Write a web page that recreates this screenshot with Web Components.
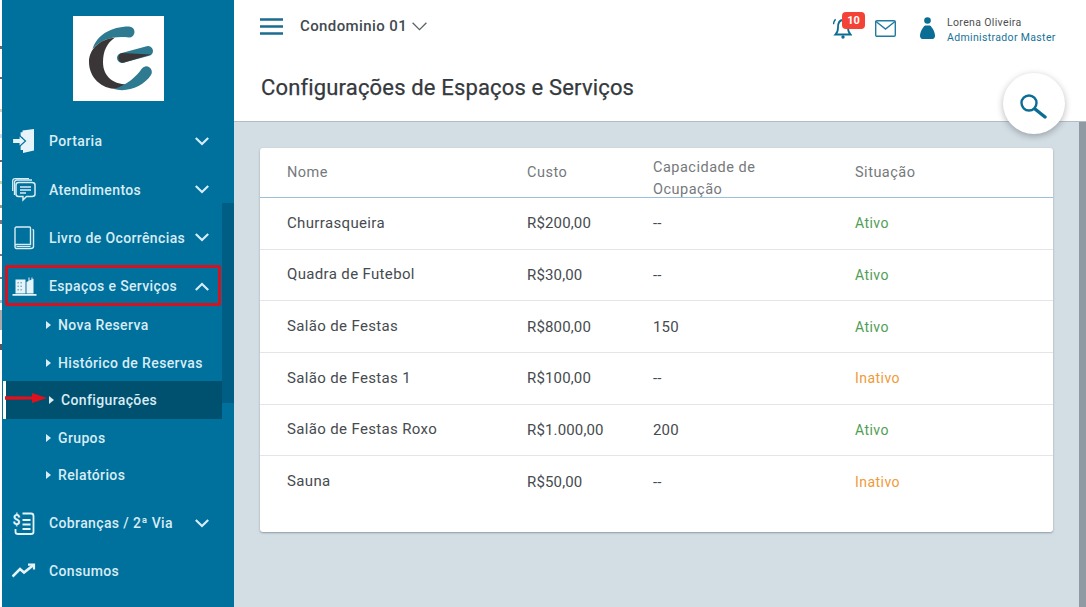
<!DOCTYPE html>
<html lang="pt-BR">
<head>
<meta charset="utf-8">
<title>Configurações de Espaços e Serviços</title>
<style>
    html, body { margin: 0; height: 100%; overflow: hidden; background: #fff; }
    body { font-family: Roboto, "Liberation Sans", sans-serif; }
</style>
</head>
<body>
<app-shell>
    <side-nav slot="nav">
        <nav-item label="Portaria" chevron="down">
            <svg slot="icon" width="24" height="24" viewBox="0 0 24 24"><path d="M10.500 1.500 22 0v21.500L11 24v-3H8.600V15h2zM10.600 3.200v5h-2V3.200z" fill="#e6f3f8"/><path d="M.500 9.500h6.500V6l6.500 6-6.500 6v-3.500H.500z" fill="#e6f3f8" stroke="#00709c" stroke-width="1.200"/></svg>
        </nav-item>
        <nav-item label="Atendimentos" chevron="down">
            <svg slot="icon" width="24" height="24" viewBox="0 0 24 24" fill="none" stroke="#d9edf5" stroke-width="1.300"><path d="M2.500 17V4.500Q2.500 2 5 2h15"/><path d="M.7 13V3Q.7.700 3 .7h14"/><path d="M6.500 4.500h13.500q3 0 3 2.500v9q0 2.500-3 2.500h-5.500l-3.500 3.500v-3.500h-4.500q-2.500 0-2.500-2.500v-9q0-2.500 2.500-2.500z" stroke-width="1.500"/><path d="M8 9h11M8 12h11M8 15h6"/></svg>
        </nav-item>
        <nav-item label="Livro de Ocorrências" chevron="down">
            <svg slot="icon" width="24" height="24" viewBox="0 0 24 24" fill="none" stroke="#d9edf5" stroke-width="1.400"><path d="M3 20.500V2.500Q3 1 4.500 1h13q1 0 1 1v16.500h-14q-1.500 0-1.500 2t1.500 2h14q3 0 3-2V4.500q0-1-1-1"/><path d="M4.500 20.500h14" stroke-width="1"/></svg>
        </nav-item>
        <nav-item label="Espaços e Serviços" chevron="up">
            <svg slot="icon" width="25" height="24" viewBox="0 0 25 24"><path d="M3.500 5.500h10v14h-10zM14.500 8l2-1V3.500h1V6.500l2-1V3.500h1v1.800l1-.5v14.700h-7zM.500 20h24v1.800H.500z" fill="#e6f3f8"/><path d="M5.500 8h1.300v1.500H5.500zM8.500 8h1.300v1.500H8.500zM5.500 11.500h1.300V13H5.500zM8.500 11.500h1.300V13H8.500zM5.500 15h1.300v1.500H5.500zM8.500 15h1.300v1.500H8.500z" fill="#6aa9c4"/></svg>
        </nav-item>
        <sub-nav>
            <sub-item>Nova Reserva</sub-item>
            <sub-item>Histórico de Reservas</sub-item>
            <sub-item active>Configurações</sub-item>
            <sub-item>Grupos</sub-item>
            <sub-item>Relatórios</sub-item>
        </sub-nav>
        <nav-item label="Cobranças / 2ª Via" chevron="down">
            <svg slot="icon" width="24" height="24" viewBox="0 0 24 24" fill="none" stroke="#e6f3f8" stroke-width="1.800"><path d="M10.500 2.500H19q2.500 0 2.500 2.500v16q0 2-2.500 2H6q-2.500 0-2.500-2v-3"/><path d="M10.500 9h8M10.500 13.500h8M10.500 18h8"/><text x="0.500" y="13.500" font-family="Roboto, sans-serif" font-size="14" font-weight="700" fill="#e6f3f8" stroke="none">$</text></svg>
        </nav-item>
        <nav-item label="Consumos">
            <svg slot="icon" width="24" height="24" viewBox="0 0 24 24" fill="none" stroke="#e6f3f8" stroke-width="2.600"><path d="M.5 17.600l7.500-7.500 4 3.500 9.500-7.500"/><path d="M16 5.600h6v5" stroke-width="2.200"/></svg>
        </nav-item>
    </side-nav>

    <top-bar slot="header" condo="Condominio 01" user="Lorena Oliveira" role="Administrador Master" badge="10">Configurações de Espaços e Serviços</top-bar>

    <data-table>
        <table-row head><span>Nome</span><span>Custo</span><span>Capacidade de Ocupação</span><span>Situação</span></table-row>
        <table-row><span>Churrasqueira</span><span>R$200,00</span><span>--</span><status-text>Ativo</status-text></table-row>
        <table-row><span>Quadra de Futebol</span><span>R$30,00</span><span>--</span><status-text>Ativo</status-text></table-row>
        <table-row><span>Salão de Festas</span><span>R$800,00</span><span>150</span><status-text>Ativo</status-text></table-row>
        <table-row><span>Salão de Festas 1</span><span>R$100,00</span><span>--</span><status-text off>Inativo</status-text></table-row>
        <table-row><span>Salão de Festas Roxo</span><span>R$1.000,00</span><span>200</span><status-text>Ativo</status-text></table-row>
        <table-row last><span>Sauna</span><span>R$50,00</span><span>--</span><status-text off>Inativo</status-text></table-row>
    </data-table>
</app-shell>

<script>
    // Page frame: sidebar on the left, header and content on the right
    class AppShell extends HTMLElement {
        constructor() {
            super();
            this.attachShadow({mode: 'open'});
            this.shadowRoot.innerHTML = `
                <style>
                    :host { display: flex; height: 607px; overflow: hidden; }
                    #edge {
                        width: 2px;
                        flex: none;
                        background: linear-gradient(#fff 0 46px, #667 46px 49px, #fff 49px 77px, #667 77px 79px, #fff 79px 109px, #d8cfb4 109px 112px, #fff 112px 134px, #c9dce8 134px 138px, #fff 138px 160px, #667 160px 162px, #fff 162px 181px, #c3d3b0 181px 184px, #fff 184px 205px, #998 205px 208px, #fff 208px 220px, #778 220px 224px, #fff 224px 254px, #778 254px 256px, #fff 256px 277px, #778 277px 279px, #fff 279px 300px, #9bc 300px 303px, #fff 303px 310px, #aaa 310px 330px, #fff 330px 344px, #556 344px 350px, #fff 350px);
                    }
                    #main { flex: 1; min-width: 0; display: flex; flex-direction: column; position: relative; }
                    #body { flex: 1; display: flex; min-height: 0; }
                    #content { flex: 1; background: #d2dde4; padding: 26px 26px 0; }
                    #strip { width: 7px; flex: none; background: #8f9aa3; }
                    #fab {
                        position: absolute;
                        top: 73px;
                        right: 21px;
                        width: 62px;
                        height: 61px;
                        border-radius: 50%;
                        background: #fff;
                        box-shadow: 0 2px 7px rgba(0,0,0,0.28);
                        display: flex;
                        align-items: center;
                        justify-content: center;
                    }
                    #fab svg { margin-top: 6px; margin-right: 1px; }
                </style>
                <div id="edge"></div>
                <slot name="nav"></slot>
                <div id="main">
                    <slot name="header"></slot>
                    <div id="body">
                        <div id="content"><slot></slot></div>
                        <div id="strip"></div>
                    </div>
                    <div id="fab">
                        <svg width="27" height="25" viewBox="0 0 27 25" fill="none" stroke="#0a6d94"><circle cx="9" cy="9" r="7.500" stroke-width="2.400"/><path d="M15 15l10 8" stroke-width="3.400" stroke-linecap="round"/></svg>
                    </div>
                </div>`;
        }
    }

    class SideNav extends HTMLElement {
        constructor() {
            super();
            this.attachShadow({mode: 'open'});
            this.shadowRoot.innerHTML = `
                <style>
                    :host {
                        display: block;
                        position: relative;
                        flex: none;
                        width: 232px;
                        box-sizing: border-box;
                        padding: 16px 12px 0 0;
                        background: #00709c;
                    }
                    #logo { display: block; margin: 0 0 16.200px 71px; background: #fff; }
                    #thumb { position: absolute; top: 203px; right: 0; width: 12px; height: 200px; background: #005d83; }
                    #mark-box {
                        position: absolute;
                        top: 265px;
                        left: 3px;
                        width: 216px;
                        height: 41px;
                        box-sizing: border-box;
                        border: 3px solid #d5121f;
                        border-radius: 2px;
                    }
                    #arrow { position: absolute; top: 392px; left: 2px; }
                </style>
                <svg id="logo" width="91" height="85" viewBox="0 0 91 85">
                    <path d="M19.500 33C24 19 38 10.500 56 10.500a5.500 5.500 0 0 1 0 11C42 20 30 22 19.500 33z" fill="#2e7a90"/>
                    <path d="M42 21.500C27 23 16 33 16 46c0 15 12 27 28 27 5 0 10-1.500 13-5-13 1.500-27-5-27-22 0-11 4-19 12-24.500z" fill="#3a3638"/>
                    <path d="M41 73c13 4 30-3 37-14a5.600 5.600 0 0 0-9.500-6C64 60 54 69 41 73z" fill="#2e7a90"/>
                    <path d="M49 42L75 35" stroke="#2e7a90" stroke-width="10" stroke-linecap="round"/>
                    <path d="M49 37L78 38.500 50.300 46.800A5 5 0 0 1 49 37z" fill="#3a3638"/>
                </svg>
                <slot></slot>
                <div id="thumb"></div>
                <div id="mark-box"></div>
                <svg id="arrow" width="44" height="12" viewBox="0 0 44 12"><path d="M1 4.200l27 .3V1L43 6 28 11V7.500l-27 .3z" fill="#e0101c"/></svg>`;
        }
    }

    class NavItem extends HTMLElement {
        constructor() {
            super();
            this.attachShadow({mode: 'open'});
            this.shadowRoot.innerHTML = `
                <style>
                    :host {
                        display: flex;
                        align-items: center;
                        height: 48.3px;
                        padding: 0 13px 0 10px;
                        color: #d8ecf5;
                        font: 500 14px Roboto, sans-serif;
                        letter-spacing: 0.37px;
                    }
                    #icon { width: 37px; flex: none; display: flex; align-items: center; }
                    #label { flex: 1; white-space: nowrap; }
                    svg { display: block; }
                </style>
                <span id="icon"><slot name="icon"></slot></span>
                <span id="label"></span>
                <svg id="chevron" width="14" height="9" viewBox="0 0 14 9" fill="none" stroke="#d8ecf5" stroke-width="2.200"><path d="M.8 1l6.200 6 6.200-6"/></svg>`;
        }

        connectedCallback() {
            this.shadowRoot.getElementById('label').textContent = this.getAttribute('label');
            var chevron = this.shadowRoot.getElementById('chevron');
            var direction = this.getAttribute('chevron');
            if (direction === null) {
                chevron.style.display = 'none';
            } else if (direction === 'up') {
                chevron.style.transform = 'scaleY(-1)';
            }
        }
    }

    class SubNav extends HTMLElement {
        constructor() {
            super();
            this.attachShadow({mode: 'open'});
            this.shadowRoot.innerHTML = `
                <style>
                    :host { display: block; margin: -4px 0 5px; }
                </style>
                <slot></slot>`;
        }
    }

    class SubItem extends HTMLElement {
        constructor() {
            super();
            this.attachShadow({mode: 'open'});
            this.shadowRoot.innerHTML = `
                <style>
                    :host {
                        display: flex;
                        align-items: center;
                        gap: 7px;
                        height: 37.500px;
                        padding-left: 44px;
                        color: #d8ecf5;
                        font: 500 14px Roboto, sans-serif;
                        letter-spacing: 0.37px;
                    }
                    :host([active]) {
                        background: #00506f;
                        margin-left: 1px;
                        padding-left: 43px;
                        border-left: 3px solid #fff;
                    }
                    #caret {
                        width: 0;
                        height: 0;
                        border-left: 5px solid #d8ecf5;
                        border-top: 4.500px solid transparent;
                        border-bottom: 4.500px solid transparent;
                    }
                </style>
                <span id="caret"></span>
                <slot></slot>`;
        }
    }

    class TopBar extends HTMLElement {
        constructor() {
            super();
            this.attachShadow({mode: 'open'});
            this.shadowRoot.innerHTML = `
                <style>
                    :host {
                        display: block;
                        height: 122px;
                        box-sizing: border-box;
                        background: #fff;
                        border-bottom: 1px solid #b2bec7;
                        padding-left: 26px;
                    }
                    #tools { display: flex; align-items: center; height: 52px; padding-right: 30px; }
                    #condo {
                        margin-left: 17px;
                        font: 500 15px Roboto, sans-serif;
                        letter-spacing: 0.4px;
                        color: #424a50;
                    }
                    #condo-chevron { margin-left: 5px; margin-top: 1px; }
                    #right { margin-left: auto; margin-top: 4px; display: flex; align-items: center; }
                    #bell { position: relative; height: 22px; width: 19px; }
                    #badge {
                        position: absolute;
                        top: -5px;
                        left: 9px;
                        width: 23px;
                        height: 17px;
                        border-radius: 4px;
                        background: #f44336;
                        color: #fff;
                        font: 700 11px/17px Roboto, sans-serif;
                        text-align: center;
                    }
                    #mail { margin-left: 23px; }
                    #person { margin-left: 24px; }
                    #who { margin-left: 12px; margin-top: 4px; width: 109px; font: 400 10.500px/15px Roboto, sans-serif; letter-spacing: 0.35px; }
                    #user { color: #4b4f52; white-space: nowrap; }
                    #role { color: #17739a; white-space: nowrap; }
                    h1 {
                        margin: 23px 0 0 1px;
                        font: 400 22px/26px Roboto, sans-serif;
                        letter-spacing: 0.16px;
                        color: #34393d;
                        -webkit-text-stroke: 0.25px #34393d;
                    }
                    svg { display: block; }
                </style>
                <div id="tools">
                    <svg width="23" height="17" viewBox="0 0 23 17" fill="none" stroke="#1b6c90" stroke-width="2.400"><path d="M0 1.500h23M0 8.500h23M0 15.500h23"/></svg>
                    <span id="condo"></span>
                    <svg id="condo-chevron" width="15" height="9" viewBox="0 0 15 9" fill="none" stroke="#5b6369" stroke-width="1.300"><path d="M.6.8l6.900 6.900L14.400.8"/></svg>
                    <div id="right">
                        <div id="bell">
                            <svg width="19" height="22" viewBox="0 0 19 22" fill="none" stroke="#0a6d94" stroke-width="1.800"><path d="M2.500 17.500c2-2 2.500-4 2.500-7C5 6 6.800 3 10 3s5 3 5 7.500c0 3 .5 5 2.500 7z"/><path d="M2.600 2.200C1.300 3.600.6 5.300.5 7.300" stroke-width="1.400"/><circle cx="10" cy="20" r="1.700" fill="#0a6d94" stroke="none"/></svg>
                            <span id="badge"></span>
                        </div>
                        <svg id="mail" width="21" height="17" viewBox="0 0 21 17" fill="none" stroke="#217b9f" stroke-width="1.400"><rect x=".7" y=".7" width="19.600" height="15.600" rx="1.200"/><path d="M1 1.500l9.500 7.500L20 1.500"/></svg>
                        <svg id="person" width="15" height="22" viewBox="0 0 15 22" fill="#0a6d94"><circle cx="7.500" cy="3.500" r="3.300"/><path d="M5 8.500h5c2.500 2 5 6.500 5 10.500 0 1.500-1 3-2.500 3h-10C1 22 0 20.500 0 19c0-4 2.500-8.500 5-10.500z"/></svg>
                        <div id="who"><div id="user"></div><div id="role"></div></div>
                    </div>
                </div>
                <h1><slot></slot></h1>`;
        }

        connectedCallback() {
            this.shadowRoot.getElementById('condo').textContent = this.getAttribute('condo');
            this.shadowRoot.getElementById('user').textContent = this.getAttribute('user');
            this.shadowRoot.getElementById('role').textContent = this.getAttribute('role');
            this.shadowRoot.getElementById('badge').textContent = this.getAttribute('badge');
        }
    }

    class DataTable extends HTMLElement {
        constructor() {
            super();
            this.attachShadow({mode: 'open'});
            this.shadowRoot.innerHTML = `
                <style>
                    :host {
                        display: block;
                        --cols: 240px 126px 202px 1fr;
                        background: #fff;
                        border-radius: 3px;
                        padding-bottom: 24px;
                        box-shadow: 0 1px 2px rgba(60,70,80,0.45);
                    }
                </style>
                <slot></slot>`;
        }
    }

    class TableRow extends HTMLElement {
        constructor() {
            super();
            this.attachShadow({mode: 'open'});
            this.shadowRoot.innerHTML = `
                <style>
                    :host {
                        display: grid;
                        grid-template-columns: var(--cols);
                        align-items: center;
                        height: 51.700px;
                        box-sizing: border-box;
                        padding-left: 27px;
                        border-bottom: 1px solid #e3e6e8;
                        color: #464b4f;
                        font: 400 15px/18px Roboto, sans-serif;
                        letter-spacing: 0.15px;
                    }
                    :host([head]) {
                        height: 50px;
                        border-bottom-color: #9cc0d6;
                        color: #75797c;
                        font-size: 14.500px;
                        line-height: 22px;
                        letter-spacing: 0.5px;
                    }
                    :host([last]) { border-bottom: 0; }
                    ::slotted(span:nth-child(1)) { margin-bottom: 1.600px; letter-spacing: 0.35px; }
                    ::slotted(span:nth-child(3)) { max-width: 130px; }
                    :host([head]) ::slotted(span:nth-child(1)) { letter-spacing: inherit; margin-bottom: 0; }
                    :host([head]) ::slotted(span:nth-child(3)) { align-self: start; margin-top: 9px; height: 39px; }
                </style>
                <slot></slot>`;
        }
    }

    class StatusText extends HTMLElement {
        constructor() {
            super();
            this.attachShadow({mode: 'open'});
            this.shadowRoot.innerHTML = `
                <style>
                    :host { display: block; color: #4f9e54; font-size: 14px; letter-spacing: 0.45px; }
                    :host([off]) { color: #ef9a3a; }
                </style>
                <slot></slot>`;
        }
    }

    customElements.define('app-shell', AppShell);
    customElements.define('side-nav', SideNav);
    customElements.define('nav-item', NavItem);
    customElements.define('sub-nav', SubNav);
    customElements.define('sub-item', SubItem);
    customElements.define('top-bar', TopBar);
    customElements.define('data-table', DataTable);
    customElements.define('table-row', TableRow);
    customElements.define('status-text', StatusText);
</script>
</body>
</html>
